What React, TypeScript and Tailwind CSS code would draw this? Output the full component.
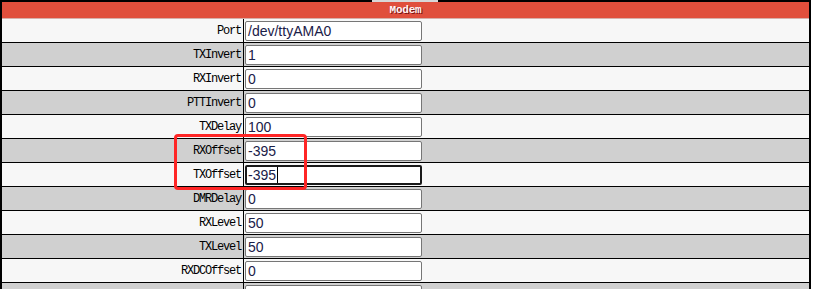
import React from 'react';

const rows = [
  { label: 'Port', value: '/dev/ttyAMA0' },
  { label: 'TXInvert', value: '1' },
  { label: 'RXInvert', value: '0' },
  { label: 'PTTInvert', value: '0' },
  { label: 'TXDelay', value: '100' },
  { label: 'RXOffset', value: '-395' },
  { label: 'TXOffset', value: '-395', focused: true },
  { label: 'DMRDelay', value: '0' },
  { label: 'RXLevel', value: '50' },
  { label: 'TXLevel', value: '50' },
  { label: 'RXDCOffset', value: '0' },
  // only the top of the next row is visible
  { label: '', value: '' },
];

export default function App() {
  return (
    <div className="relative w-[813px] h-[289px] overflow-hidden bg-white">
      <div className="w-[811px] border-x-2 border-black">
        {/* top strip */}
        <div className="flex h-[2px]">
          <div className="w-[370px] bg-black" />
          <div className="w-[66px] bg-[#d8d8d8]" />
          <div className="flex-1 bg-black" />
        </div>

        <div className="h-[17px] bg-[#e04f3c] border-b border-[#d6b0aa] flex items-center justify-center">
          <span
            className="text-[11px] font-bold text-[#fff4f4] leading-none tracking-[-0.2px]"
            style={{ fontFamily: '"Liberation Mono", monospace', textShadow: '1px 1px 0 #7a1010' }}
          >
            Modem
          </span>
        </div>

        {rows.map((row, i) => (
          <div
            key={i}
            className={`flex h-[24px] border-b border-black ${i % 2 === 0 ? 'bg-[#f7f7f7]' : 'bg-[#d0d0d0]'}`}
          >
            <div
              className="w-[242px] border-r border-black flex items-center justify-end pr-[2px] pt-[1px] text-[12px] tracking-[-1.2px] text-black"
              style={{ fontFamily: '"Liberation Mono", monospace' }}
            >
              {row.label}
            </div>
            <div className="flex items-center pl-[1px]">
              <div
                className={`w-[177px] h-[20px] bg-white rounded-[2px] flex items-center pt-[1px] text-[14px] text-[#1a2048] ${
                  row.focused ? 'border-2 border-[#1a1a1a] pl-[1px]' : 'border border-[#767676] pl-[2px]'
                }`}
                style={{ fontFamily: '"Liberation Sans", Arial, sans-serif' }}
              >
                {row.value}
                {row.focused && <span className="inline-block w-[1px] h-[16px] bg-black ml-[1px]" />}
              </div>
            </div>
          </div>
        ))}
      </div>

      {/* annotation */}
      <div className="absolute left-[174px] top-[134px] w-[133px] h-[56px] border-[3px] border-[#ff2626] rounded-[4px] pointer-events-none" />
    </div>
  );
}
